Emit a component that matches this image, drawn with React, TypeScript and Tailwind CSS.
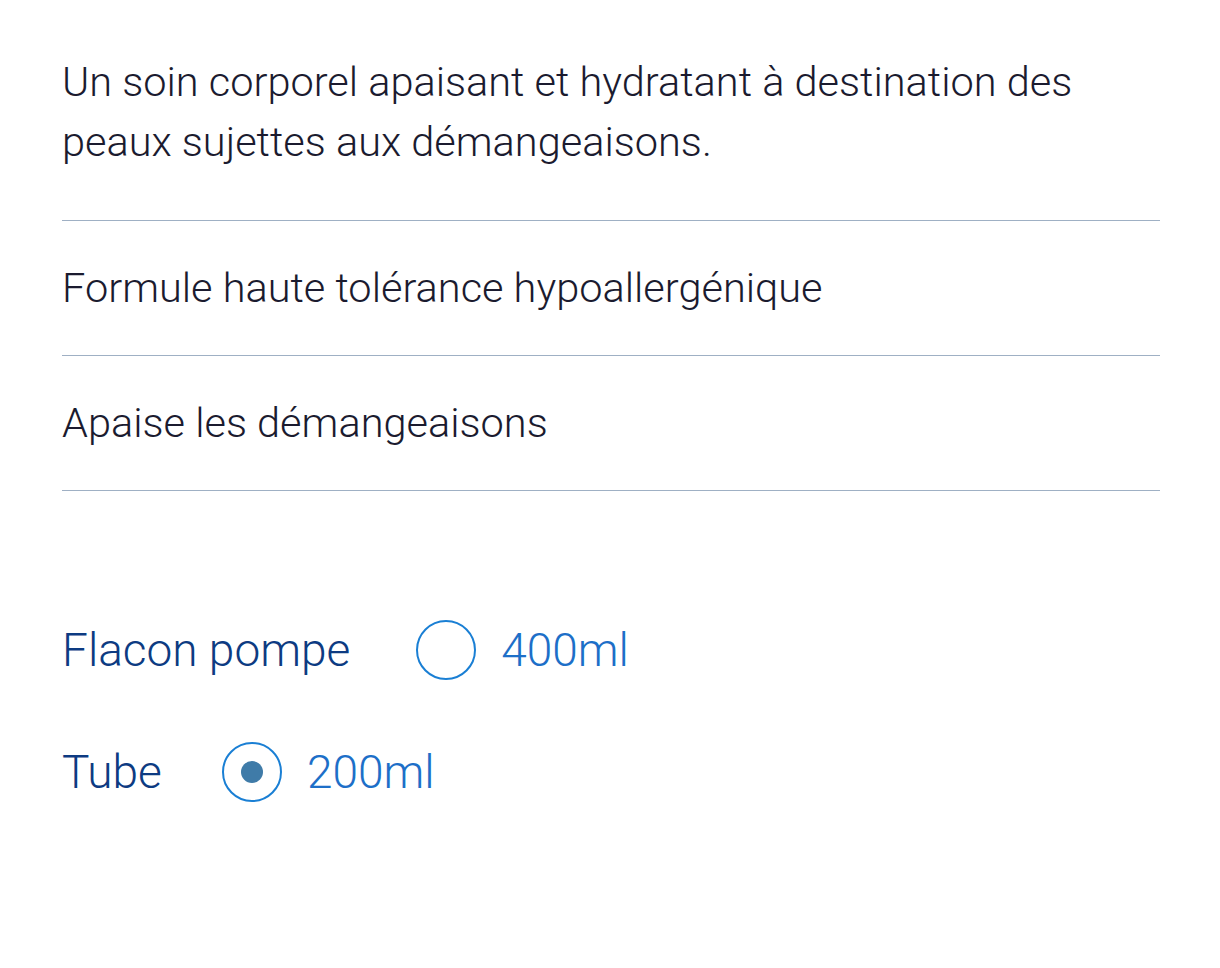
import React from "react";

function Radio({ checked }: { checked?: boolean }) {
  return (
    <span className="flex h-[60px] w-[60px] items-center justify-center rounded-full border-2 border-[#1a7fd4]">
      {checked && <span className="h-[22px] w-[22px] rounded-full bg-[#3f7ba8]" />}
    </span>
  );
}

export default function App() {
  return (
    <div className="min-h-[968px] w-[1220px] bg-white" style={{ fontFamily: "Roboto, 'Liberation Sans', sans-serif" }}>
      <div className="ml-[62px] w-[1098px] pt-[52px]">
        <p className="max-w-[1040px] text-[41.5px] leading-[60px] font-light text-[#1b1b2f]">
          Un soin corporel apaisant et hydratant à destination des peaux sujettes aux démangeaisons.
        </p>
        <div className="mt-[48px] border-t border-[#9fb0c4]" />
        <div className="py-[37px] text-[41.5px] leading-[60px] font-light text-[#1b1b2f]">Formule haute tolérance hypoallergénique</div>
        <div className="border-t border-[#9fb0c4]" />
        <div className="py-[37px] text-[41.5px] leading-[60px] font-light text-[#1b1b2f]">Apaise les démangeaisons</div>
        <div className="border-t border-[#9fb0c4]" />
        <div className="mt-[129px] flex flex-col gap-[62px] text-[46px] leading-[60px] font-light">
          <div className="flex items-center">
            <span className="mr-[66px] text-[#0d3b82]">Flacon pompe</span>
            <Radio />
            <span className="ml-[25px] text-[#1d6fc8]">400ml</span>
          </div>
          <div className="flex items-center">
            <span className="mr-[60px] text-[#0d3b82]">Tube</span>
            <Radio checked />
            <span className="ml-[25px] text-[#1d6fc8]">200ml</span>
          </div>
        </div>
      </div>
    </div>
  );
}
